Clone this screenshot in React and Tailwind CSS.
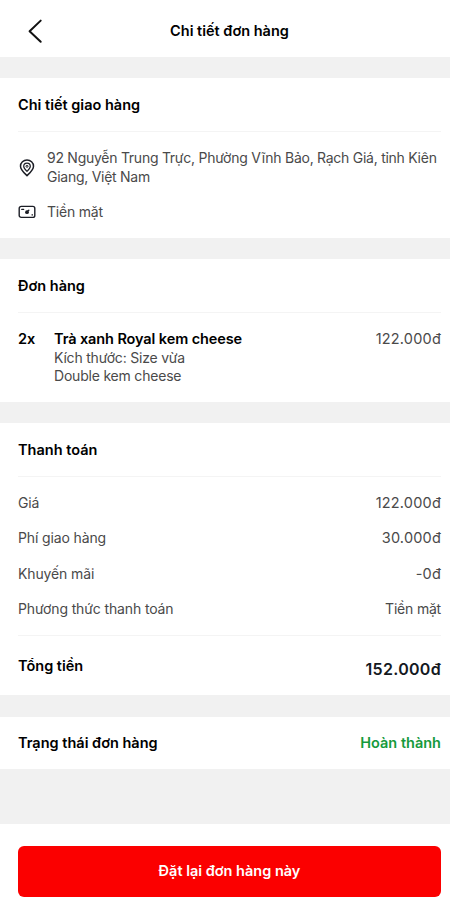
const BackIcon = () => (
  <svg width="16" height="26" viewBox="0 0 16 26" fill="none" stroke="#111111" strokeWidth="2" strokeLinecap="round" strokeLinejoin="round">
    <path d="M13.7 2.6 2.600 13.200l11.100 10.600" />
  </svg>
);

const PinIcon = () => (
  <svg width="16" height="18" viewBox="0 0 16 18" fill="none" stroke="#1c1e26" strokeWidth="1.5" strokeLinejoin="round">
    <path d="M8 16.6C5.9 14.6 1.5 11 1.5 7.2a6.5 6.2 0 0 1 13 0c0 3.800-4.400 7.400-6.500 9.400Z" />
    <path d="M8 12.400C6.600 11.100 4.700 9.200 4.700 7.300a3.300 3.200 0 0 1 6.600 0c0 1.900-1.900 3.800-3.300 5.100Z" strokeWidth="1.200" />
    <circle cx="8" cy="7.300" r="1" strokeWidth="1" />
  </svg>
);

const CashIcon = () => (
  <svg width="18" height="14" viewBox="0 0 18 14" fill="none" stroke="#1c1e26" strokeWidth="1.400" strokeLinecap="round" strokeLinejoin="round">
    <rect x="1.200" y="1.400" width="15.600" height="11" rx="2" />
    <path d="M3.800 4.400h1.800M14.200 9.800v.3" />
    <circle cx="9" cy="7.200" r="1.900" fill="#1c1e26" stroke="none" />
    <path d="m9.300 6.600 1.500-1.400" />
  </svg>
);

const charges = [
  { label: 'Giá', value: '122.000đ', spacing: 'text-[14.5px] tracking-[0.2px]' },
  { label: 'Phí giao hàng', value: '30.000đ', spacing: 'text-[14.5px] tracking-[0.2px]' },
  { label: 'Khuyến mãi', value: '-0đ', spacing: 'text-[14.5px] tracking-[0.2px]' },
  { label: 'Phương thức thanh toán', value: 'Tiền mặt', spacing: 'tracking-[-0.2px]' },
];

const SectionTitle = ({ children }) => (
  <h2 className="h-[54px] border-b border-[#f4f4f4] pt-[17px] text-[14.5px] font-semibold leading-5">
    {children}
  </h2>
);

const App = () => {
  return (
    <div className="flex h-[900px] w-full flex-col bg-[#f1f1f1] font-['Inter',sans-serif] text-sm text-black">
      <header className="grid h-[57px] grid-cols-[1fr_auto_1fr] items-center bg-white pl-[27px] pr-[18px] pt-[5px]">
        <button aria-label="Back" className="w-4">
          <BackIcon />
        </button>
        <h1 className="text-[14.5px] font-semibold">Chi tiết đơn hàng</h1>
      </header>

      {/* Delivery */}
      <section className="mt-[21px] h-[160px] bg-white pl-[18px] pr-[9px]">
        <SectionTitle>Chi tiết giao hàng</SectionTitle>
        <div className="flex items-center pt-[17px] text-[#4a4a4a]">
          <span className="flex w-[29px] shrink-0 pl-px">
            <PinIcon />
          </span>
          <p className="whitespace-nowrap leading-[18.5px] tracking-[-0.265px]">
            92 Nguyễn Trung Trực, Phường Vĩnh Bảo, Rạch Giá, tỉnh Kiên
            <br />
            Giang, Việt Nam
          </p>
        </div>
        <div className="mt-[17px] flex items-center leading-[18px] tracking-[-0.2px] text-[#4a4a4a]">
          <span className="w-[29px]">
            <CashIcon />
          </span>
          Tiền mặt
        </div>
      </section>

      {/* Items */}
      <section className="mt-[21px] h-[143px] bg-white pl-[18px] pr-[9px]">
        <SectionTitle>Đơn hàng</SectionTitle>
        <div className="flex pt-[17px] leading-[18.5px]">
          <span className="w-[36px] text-[14.5px] font-semibold">2x</span>
          <div className="flex-1 tracking-[-0.2px] text-[#4a4a4a]">
            <p className="text-[14.5px] font-semibold tracking-[-0.1px] text-black">Trà xanh Royal kem cheese</p>
            <p>Kích thước: Size vừa</p>
            <p>Double kem cheese</p>
          </div>
          <span className="text-[14.5px] tracking-[0.2px] text-[#4a4a4a]">122.000đ</span>
        </div>
      </section>

      {/* Payment */}
      <section className="mt-[21px] h-[272px] bg-white pl-[18px] pr-[9px]">
        <SectionTitle>Thanh toán</SectionTitle>
        <div className="flex flex-col gap-[17.300px] border-b border-[#f4f4f4] pb-[17px] pt-[17px] leading-[18px] text-[#4a4a4a]">
          {charges.map((row) => (
            <div key={row.label} className="flex justify-between">
              <span className="tracking-[-0.13px]">{row.label}</span>
              <span className={row.spacing}>{row.value}</span>
            </div>
          ))}
        </div>
        <div className="flex justify-between pt-5 font-semibold leading-5">
          <span className="text-[14.5px]">Tổng tiền</span>
          <span className="pt-[3px] text-base leading-5 tracking-[0.3px] text-[#14191f]">152.000đ</span>
        </div>
      </section>

      {/* Status */}
      <section className="mt-[22px] flex h-[52px] items-center justify-between bg-white pl-[18px] pr-[9px] text-[14.5px] font-semibold">
        <span>Trạng thái đơn hàng</span>
        <span className="text-[#159a3c]">Hoàn thành</span>
      </section>

      <footer className="mt-auto h-[76px] bg-white pl-[18px] pr-[9px] pt-[22px]">
        <button className="h-[51px] w-full rounded-md bg-[#fb0000] text-[14.5px] font-semibold text-white">
          Đặt lại đơn hàng này
        </button>
      </footer>
    </div>
  );
};

export default App;
